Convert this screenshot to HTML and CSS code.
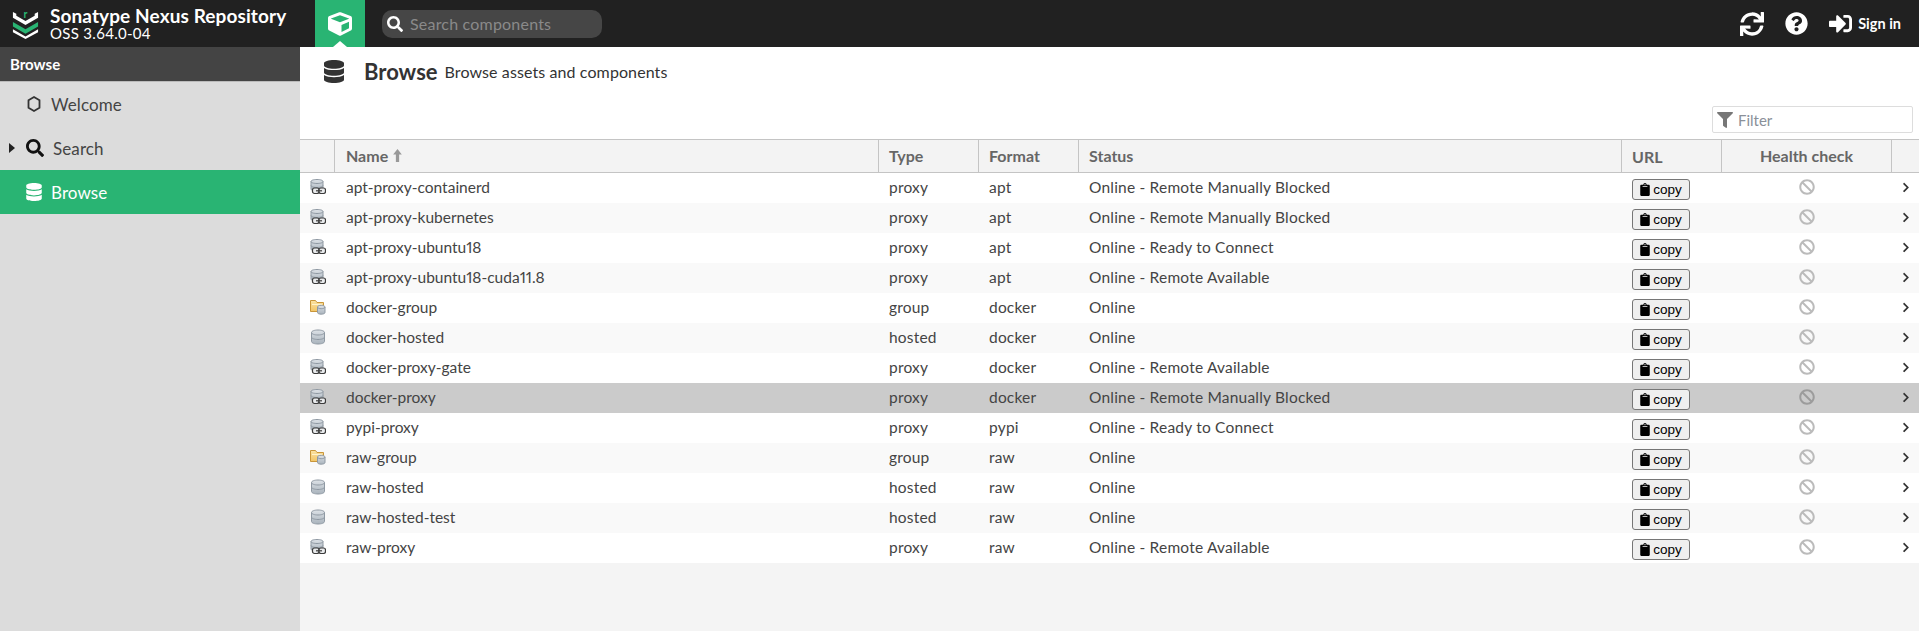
FILE: index.html
```html
<!DOCTYPE html>
<html lang="en">
<head>
    <meta charset="UTF-8">
    <title>Browse - Nexus Repository Manager</title>
    <link rel="stylesheet" href="styles.css">
</head>
<body>
    <svg class="defs" width="0" height="0">
        <defs>
            <symbol id="i-db" viewBox="0 0 448 512"><path d="M448 73.143v45.714C448 159.143 347.667 192 224 192S0 159.143 0 118.857V73.143C0 32.857 100.333 0 224 0s224 32.857 224 73.143zM448 176v102.857C448 319.143 347.667 352 224 352S0 319.143 0 278.857V176c48.125 33.143 136.208 48.572 224 48.572S399.874 209.143 448 176zm0 160v102.857C448 479.143 347.667 512 224 512S0 479.143 0 438.857V336c48.125 33.143 136.208 48.572 224 48.572S399.874 369.143 448 336z"/></symbol>
            <symbol id="i-search" viewBox="0 0 512 512"><path d="M505 442.7L405.3 343c-4.5-4.5-10.6-7-17-7H372c27.6-35.3 44-79.7 44-128C416 93.1 322.9 0 208 0S0 93.1 0 208s93.1 208 208 208c48.3 0 92.7-16.4 128-44v16.3c0 6.4 2.5 12.5 7 17l99.7 99.7c9.4 9.4 24.6 9.4 33.9 0l28.3-28.3c9.4-9.4 9.4-24.6.1-34zM208 336c-70.7 0-128-57.2-128-128 0-70.7 57.2-128 128-128 70.7 0 128 57.2 128 128 0 70.7-57.2 128-128 128z"/></symbol>
            <symbol id="i-ban" viewBox="0 0 512 512"><path d="M256 8C119.034 8 8 119.033 8 256s111.034 248 248 248 248-111.034 248-248S392.967 8 256 8zm130.108 117.892c65.448 65.448 70 165.481 20.677 235.637L150.47 105.216c70.204-49.356 170.226-44.735 235.638 20.676zM125.892 386.108c-65.448-65.448-70-165.481-20.677-235.637L361.53 406.784c-70.203 49.356-170.226 44.736-235.638-20.676z"/></symbol>
            <symbol id="i-chevron" viewBox="0 0 320 512"><path d="M285.476 272.971L91.132 467.314c-9.373 9.373-24.569 9.373-33.941 0l-22.667-22.667c-9.357-9.357-9.375-24.522-.04-33.901L188.505 256 34.484 101.255c-9.335-9.379-9.317-24.544.04-33.901l22.667-22.667c9.373-9.373 24.569-9.373 33.941 0L285.475 239.03c9.373 9.372 9.373 24.568.001 33.941z"/></symbol>
            <symbol id="i-clip" viewBox="0 0 384 512"><path d="M384 112v352c0 26.51-21.49 48-48 48H48c-26.51 0-48-21.49-48-48V112c0-26.51 21.49-48 48-48h80c0-35.29 28.71-64 64-64s64 28.71 64 64h80c26.51 0 48 21.49 48 48zM192 40c-13.255 0-24 10.745-24 24s10.745 24 24 24 24-10.745 24-24-10.745-24-24-24zm96 114v-20a6 6 0 0 0-6-6H102a6 6 0 0 0-6 6v20a6 6 0 0 0 6 6h180a6 6 0 0 0 6-6z"/></symbol>
            <linearGradient id="g-db" x1="0" y1="0" x2="0" y2="1"><stop offset="0" stop-color="#dde2e7"/><stop offset="1" stop-color="#a9b3bc"/></linearGradient>
            <linearGradient id="g-folder" x1="0" y1="0" x2="0" y2="1"><stop offset="0" stop-color="#fbe3a4"/><stop offset="1" stop-color="#f2c566"/></linearGradient>
            <symbol id="r-hosted" viewBox="0 0 16 16">
                <path d="M1.500 3.500C1.500 2 4.500 1 8 1s6.500 1 6.500 2.500v9C14.500 14 11.500 15 8 15s-6.500-1-6.500-2.500z" fill="url(#g-db)" stroke="#8f99a3"/>
                <path d="M1.500 3.500C1.500 5 4.500 6 8 6s6.500-1 6.500-2.500M1.500 8c0 1.500 3 2.500 6.500 2.500s6.500-1 6.500-2.500" fill="none" stroke="#8f99a3"/>
            </symbol>
            <symbol id="r-proxy" viewBox="0 0 16 16">
                <path d="M1 2.500C1 1.200 3.800.5 7 .5s6 .7 6 2V10c0 1.300-2.800 2-6 2s-6-.7-6-2z" fill="url(#g-db)" stroke="#8f99a3"/>
                <path d="M1 2.500c0 1.300 2.800 2 6 2s6-.7 6-2M1 6.500c0 1.300 2.800 2 6 2s6-.7 6-2" fill="none" stroke="#8f99a3"/>
                <rect x="2.500" y="9" width="6.500" height="5.500" rx="2" fill="#e8eaec" stroke="#3c3c3c" stroke-width="1.200"/>
                <rect x="9" y="9" width="6.500" height="5.500" rx="2" fill="#e8eaec" stroke="#3c3c3c" stroke-width="1.200"/>
                <path d="M6 11.800h6" stroke="#3c3c3c" stroke-width="1.200"/>
            </symbol>
            <symbol id="r-group" viewBox="0 0 16 16">
                <path d="M.5 1.500h5l1.500 2h6.500v9H.5z" fill="url(#g-folder)" stroke="#c9963a"/>
                <path d="M2 5.500h10" stroke="#fff3cf"/>
                <path d="M7.500 8c0-1 1.700-1.700 3.700-1.700s3.800.7 3.800 1.700v5.500c0 1-1.800 1.700-3.800 1.700s-3.700-.7-3.700-1.700z" fill="url(#g-db)" stroke="#8f99a3"/>
                <path d="M7.500 8c0 1 1.700 1.700 3.700 1.700s3.800-.7 3.800-1.700" fill="none" stroke="#8f99a3"/>
            </symbol>
        </defs>
    </svg>

    <header class="topbar">
        <div class="brand">
            <svg class="brand-logo" viewBox="0 -2 30 33" width="29" height="32">
                <path d="M2 2v6l13 7.500L28 8V2l-3.500 2v2L15 11.500 5.500 6V4z" fill="#fff"/>
                <text x="15" y="8" class="logo-r">r</text>
                <path d="M2 12.500l13 7.500 13-7.500V17l-13 7.500L2 17z" fill="#29b473"/>
                <path d="M2 20l13 7.500L28 20v3l-13 7-13-7z" fill="#fff"/>
            </svg>
            <div class="brand-text">
                <div class="brand-name">Sonatype Nexus Repository</div>
                <div class="brand-version">OSS 3.64.0-04</div>
            </div>
        </div>
        <div class="mode-tab">
            <svg viewBox="0 0 512 512" width="24" height="24"><path fill="#fff" d="M239.1 6.3l-208 78c-18.7 7-31.1 25-31.1 45v225.1c0 18.2 10.3 34.8 26.5 42.9l208 104c13.5 6.8 29.4 6.8 42.9 0l208-104c16.3-8.1 26.5-24.8 26.5-42.9V129.3c0-20-12.4-37.9-31.1-44.9l-208-78C262 2.2 250 2.2 239.1 6.3zM256 68.4l192 72v1.1l-192 78-192-78v-1.1l192-72zm32 356V275.5l160-65v133.9l-160 80z"/></svg>
        </div>
        <div class="quick-search">
            <svg class="icon-white" viewBox="0 0 512 512" width="16" height="16"><use href="#i-search"/></svg>
            <span>Search components</span>
        </div>
        <div class="top-actions">
            <svg class="icon-white" viewBox="0 0 512 512" width="24" height="24"><path d="M440.65 12.57l4 82.77A247.16 247.16 0 0 0 255.83 8C134.73 8 33.91 94.92 12.29 209.82A12 12 0 0 0 24.09 224h49.05a12 12 0 0 0 11.67-9.26 175.91 175.91 0 0 1 317-56.94l-101.46-4.86a12 12 0 0 0-12.57 12v47.41a12 12 0 0 0 12 12H500a12 12 0 0 0 12-12V12a12 12 0 0 0-12-12h-47.37a12 12 0 0 0-11.98 12.57zM255.83 432a175.61 175.61 0 0 1-146-77.8l101.8 4.87a12 12 0 0 0 12.57-12v-47.4a12 12 0 0 0-12-12H12a12 12 0 0 0-12 12V500a12 12 0 0 0 12 12h47.35a12 12 0 0 0 12-12.6l-4.15-82.57A247.17 247.17 0 0 0 255.83 504c121.11 0 221.93-86.92 243.55-201.82a12 12 0 0 0-11.8-14.18h-49.05a12 12 0 0 0-11.67 9.26A175.86 175.86 0 0 1 255.83 432z"/></svg>
            <svg class="icon-white" viewBox="0 0 512 512" width="23" height="23"><path d="M504 256c0 136.997-111.043 248-248 248S8 392.997 8 256C8 119.083 119.043 8 256 8s248 111.083 248 248zM262.655 90c-54.497 0-89.255 22.957-116.549 63.758-3.536 5.286-2.353 12.415 2.715 16.258l34.699 26.31c5.205 3.947 12.621 3.008 16.665-2.122 17.864-22.658 30.113-35.797 57.303-35.797 20.429 0 45.698 13.148 45.698 32.958 0 14.976-12.363 22.667-32.534 33.976C247.128 238.528 216 254.941 216 296v4c0 6.627 5.373 12 12 12h56c6.627 0 12-5.373 12-12v-1.333c0-28.462 83.186-29.647 83.186-106.667 0-58.002-60.165-102-116.531-102zM256 338c-25.365 0-46 20.635-46 46 0 25.364 20.635 46 46 46s46-20.636 46-46c0-25.365-20.635-46-46-46z"/></svg>
            <div class="sign-in">
                <svg class="icon-white" viewBox="0 0 512 512" width="23" height="23"><path d="M416 448h-84c-6.6 0-12-5.4-12-12v-40c0-6.6 5.4-12 12-12h84c17.7 0 32-14.3 32-32V160c0-17.7-14.3-32-32-32h-84c-6.6 0-12-5.4-12-12V76c0-6.6 5.4-12 12-12h84c53 0 96 43 96 96v192c0 53-43 96-96 96zm-47-201L201 79c-15-15-41-4.5-41 17v96H24c-13.3 0-24 10.7-24 24v96c0 13.3 10.7 24 24 24h136v96c0 21.5 26 32 41 17l168-168c9.3-9.4 9.3-24.6 0-34z"/></svg>
                <span>Sign in</span>
            </div>
        </div>
    </header>

    <div class="main">
        <nav class="sidebar">
            <div class="sidebar-title">Browse</div>
            <div class="nav-item">
                <svg class="nav-icon" viewBox="0 0 16 18" width="16" height="18"><path d="M8 2l5.500 3.200v7.600L8 16l-5.500-3.200V5.200z" fill="none" stroke="#333" stroke-width="1.800"/></svg>
                <span>Welcome</span>
            </div>
            <div class="nav-item">
                <span class="nav-arrow"></span>
                <svg class="nav-icon" viewBox="0 0 512 512" width="18" height="18"><use href="#i-search"/></svg>
                <span>Search</span>
            </div>
            <div class="nav-item active">
                <svg class="nav-icon" viewBox="0 0 448 512" width="16" height="18"><use href="#i-db"/></svg>
                <span>Browse</span>
            </div>
        </nav>

        <main class="content">
            <div class="page-head">
                <svg class="page-icon" viewBox="0 0 448 512" width="20" height="23"><use href="#i-db"/></svg>
                <h1>Browse</h1>
                <span class="page-sub">Browse assets and components</span>
            </div>
            <div class="toolbar">
                <div class="filter">
                    <svg viewBox="0 0 512 512" width="16" height="16"><path d="M487.976 0H24.028C2.71 0-8.047 25.866 7.058 40.971L192 225.941V432c0 7.831 3.821 15.17 10.237 19.662l80 55.98C298.02 518.69 320 507.493 320 487.98V225.941l184.947-184.97C520.021 25.896 509.338 0 487.976 0z"/></svg>
                    <span>Filter</span>
                </div>
            </div>

            <div class="grid">
                <div class="row head">
                    <div class="cell c-icon"></div>
                    <div class="cell c-name">Name <svg class="sort" viewBox="0 0 8 12" width="9" height="13"><path d="M4 0l4 5H5.500v7h-3V5H0z"/></svg></div>
                    <div class="cell c-type">Type</div>
                    <div class="cell c-format">Format</div>
                    <div class="cell c-status">Status</div>
                    <div class="cell c-url">URL</div>
                    <div class="cell c-health">Health check</div>
                    <div class="cell c-more"></div>
                </div>

                <div class="row">
                    <div class="cell c-icon"><svg width="16" height="16"><use href="#r-proxy"/></svg></div>
                    <div class="cell c-name">apt-proxy-containerd</div><div class="cell c-type">proxy</div><div class="cell c-format">apt</div><div class="cell c-status">Online - Remote Manually Blocked</div>
                    <div class="cell c-url"><button class="copy"><svg viewBox="0 0 384 512" width="10" height="13"><use href="#i-clip"/></svg> copy</button></div>
                    <div class="cell c-health"><svg class="ban" width="16" height="16"><use href="#i-ban"/></svg></div>
                    <div class="cell c-more"><svg class="more" width="8" height="11"><use href="#i-chevron"/></svg></div>
                </div>
                <div class="row">
                    <div class="cell c-icon"><svg width="16" height="16"><use href="#r-proxy"/></svg></div>
                    <div class="cell c-name">apt-proxy-kubernetes</div><div class="cell c-type">proxy</div><div class="cell c-format">apt</div><div class="cell c-status">Online - Remote Manually Blocked</div>
                    <div class="cell c-url"><button class="copy"><svg viewBox="0 0 384 512" width="10" height="13"><use href="#i-clip"/></svg> copy</button></div>
                    <div class="cell c-health"><svg class="ban" width="16" height="16"><use href="#i-ban"/></svg></div>
                    <div class="cell c-more"><svg class="more" width="8" height="11"><use href="#i-chevron"/></svg></div>
                </div>
                <div class="row">
                    <div class="cell c-icon"><svg width="16" height="16"><use href="#r-proxy"/></svg></div>
                    <div class="cell c-name">apt-proxy-ubuntu18</div><div class="cell c-type">proxy</div><div class="cell c-format">apt</div><div class="cell c-status">Online - Ready to Connect</div>
                    <div class="cell c-url"><button class="copy"><svg viewBox="0 0 384 512" width="10" height="13"><use href="#i-clip"/></svg> copy</button></div>
                    <div class="cell c-health"><svg class="ban" width="16" height="16"><use href="#i-ban"/></svg></div>
                    <div class="cell c-more"><svg class="more" width="8" height="11"><use href="#i-chevron"/></svg></div>
                </div>
                <div class="row">
                    <div class="cell c-icon"><svg width="16" height="16"><use href="#r-proxy"/></svg></div>
                    <div class="cell c-name">apt-proxy-ubuntu18-cuda11.8</div><div class="cell c-type">proxy</div><div class="cell c-format">apt</div><div class="cell c-status">Online - Remote Available</div>
                    <div class="cell c-url"><button class="copy"><svg viewBox="0 0 384 512" width="10" height="13"><use href="#i-clip"/></svg> copy</button></div>
                    <div class="cell c-health"><svg class="ban" width="16" height="16"><use href="#i-ban"/></svg></div>
                    <div class="cell c-more"><svg class="more" width="8" height="11"><use href="#i-chevron"/></svg></div>
                </div>
                <div class="row">
                    <div class="cell c-icon"><svg width="16" height="16"><use href="#r-group"/></svg></div>
                    <div class="cell c-name">docker-group</div><div class="cell c-type">group</div><div class="cell c-format">docker</div><div class="cell c-status">Online</div>
                    <div class="cell c-url"><button class="copy"><svg viewBox="0 0 384 512" width="10" height="13"><use href="#i-clip"/></svg> copy</button></div>
                    <div class="cell c-health"><svg class="ban" width="16" height="16"><use href="#i-ban"/></svg></div>
                    <div class="cell c-more"><svg class="more" width="8" height="11"><use href="#i-chevron"/></svg></div>
                </div>
                <div class="row">
                    <div class="cell c-icon"><svg width="16" height="16"><use href="#r-hosted"/></svg></div>
                    <div class="cell c-name">docker-hosted</div><div class="cell c-type">hosted</div><div class="cell c-format">docker</div><div class="cell c-status">Online</div>
                    <div class="cell c-url"><button class="copy"><svg viewBox="0 0 384 512" width="10" height="13"><use href="#i-clip"/></svg> copy</button></div>
                    <div class="cell c-health"><svg class="ban" width="16" height="16"><use href="#i-ban"/></svg></div>
                    <div class="cell c-more"><svg class="more" width="8" height="11"><use href="#i-chevron"/></svg></div>
                </div>
                <div class="row">
                    <div class="cell c-icon"><svg width="16" height="16"><use href="#r-proxy"/></svg></div>
                    <div class="cell c-name">docker-proxy-gate</div><div class="cell c-type">proxy</div><div class="cell c-format">docker</div><div class="cell c-status">Online - Remote Available</div>
                    <div class="cell c-url"><button class="copy"><svg viewBox="0 0 384 512" width="10" height="13"><use href="#i-clip"/></svg> copy</button></div>
                    <div class="cell c-health"><svg class="ban" width="16" height="16"><use href="#i-ban"/></svg></div>
                    <div class="cell c-more"><svg class="more" width="8" height="11"><use href="#i-chevron"/></svg></div>
                </div>
                <div class="row selected">
                    <div class="cell c-icon"><svg width="16" height="16"><use href="#r-proxy"/></svg></div>
                    <div class="cell c-name">docker-proxy</div><div class="cell c-type">proxy</div><div class="cell c-format">docker</div><div class="cell c-status">Online - Remote Manually Blocked</div>
                    <div class="cell c-url"><button class="copy"><svg viewBox="0 0 384 512" width="10" height="13"><use href="#i-clip"/></svg> copy</button></div>
                    <div class="cell c-health"><svg class="ban" width="16" height="16"><use href="#i-ban"/></svg></div>
                    <div class="cell c-more"><svg class="more" width="8" height="11"><use href="#i-chevron"/></svg></div>
                </div>
                <div class="row">
                    <div class="cell c-icon"><svg width="16" height="16"><use href="#r-proxy"/></svg></div>
                    <div class="cell c-name">pypi-proxy</div><div class="cell c-type">proxy</div><div class="cell c-format">pypi</div><div class="cell c-status">Online - Ready to Connect</div>
                    <div class="cell c-url"><button class="copy"><svg viewBox="0 0 384 512" width="10" height="13"><use href="#i-clip"/></svg> copy</button></div>
                    <div class="cell c-health"><svg class="ban" width="16" height="16"><use href="#i-ban"/></svg></div>
                    <div class="cell c-more"><svg class="more" width="8" height="11"><use href="#i-chevron"/></svg></div>
                </div>
                <div class="row">
                    <div class="cell c-icon"><svg width="16" height="16"><use href="#r-group"/></svg></div>
                    <div class="cell c-name">raw-group</div><div class="cell c-type">group</div><div class="cell c-format">raw</div><div class="cell c-status">Online</div>
                    <div class="cell c-url"><button class="copy"><svg viewBox="0 0 384 512" width="10" height="13"><use href="#i-clip"/></svg> copy</button></div>
                    <div class="cell c-health"><svg class="ban" width="16" height="16"><use href="#i-ban"/></svg></div>
                    <div class="cell c-more"><svg class="more" width="8" height="11"><use href="#i-chevron"/></svg></div>
                </div>
                <div class="row">
                    <div class="cell c-icon"><svg width="16" height="16"><use href="#r-hosted"/></svg></div>
                    <div class="cell c-name">raw-hosted</div><div class="cell c-type">hosted</div><div class="cell c-format">raw</div><div class="cell c-status">Online</div>
                    <div class="cell c-url"><button class="copy"><svg viewBox="0 0 384 512" width="10" height="13"><use href="#i-clip"/></svg> copy</button></div>
                    <div class="cell c-health"><svg class="ban" width="16" height="16"><use href="#i-ban"/></svg></div>
                    <div class="cell c-more"><svg class="more" width="8" height="11"><use href="#i-chevron"/></svg></div>
                </div>
                <div class="row">
                    <div class="cell c-icon"><svg width="16" height="16"><use href="#r-hosted"/></svg></div>
                    <div class="cell c-name">raw-hosted-test</div><div class="cell c-type">hosted</div><div class="cell c-format">raw</div><div class="cell c-status">Online</div>
                    <div class="cell c-url"><button class="copy"><svg viewBox="0 0 384 512" width="10" height="13"><use href="#i-clip"/></svg> copy</button></div>
                    <div class="cell c-health"><svg class="ban" width="16" height="16"><use href="#i-ban"/></svg></div>
                    <div class="cell c-more"><svg class="more" width="8" height="11"><use href="#i-chevron"/></svg></div>
                </div>
                <div class="row">
                    <div class="cell c-icon"><svg width="16" height="16"><use href="#r-proxy"/></svg></div>
                    <div class="cell c-name">raw-proxy</div><div class="cell c-type">proxy</div><div class="cell c-format">raw</div><div class="cell c-status">Online - Remote Available</div>
                    <div class="cell c-url"><button class="copy"><svg viewBox="0 0 384 512" width="10" height="13"><use href="#i-clip"/></svg> copy</button></div>
                    <div class="cell c-health"><svg class="ban" width="16" height="16"><use href="#i-ban"/></svg></div>
                    <div class="cell c-more"><svg class="more" width="8" height="11"><use href="#i-chevron"/></svg></div>
                </div>
            </div>
        </main>
    </div>
</body>
</html>
```

FILE: styles.css
```css
* {
    box-sizing: border-box;
}
html, body {
    height: 100%;
}
body {
    margin: 0;
    font-family: Lato, "Open Sans", sans-serif;
    font-size: 14px;
    color: #333;
    display: flex;
    flex-direction: column;
    overflow: hidden;
}
.defs {
    position: absolute;
}

/* top bar */
.topbar {
    height: 47px;
    flex: none;
    background: #212121;
    display: flex;
    align-items: center;
    color: #fff;
}
.brand {
    width: 315px;
    display: flex;
    align-items: center;
    gap: 10px;
    padding-left: 11px;
}
.logo-r {
    font: bold 11px Lato, sans-serif;
    fill: #29b473;
    text-anchor: middle;
}
.brand-name {
    font-size: 19px;
    font-weight: 700;
    line-height: 20px;
    letter-spacing: 0.1px;
}
.brand-version {
    font-size: 15px;
    line-height: 15px;
    letter-spacing: 0.3px;
}
.mode-tab {
    position: relative;
    width: 50px;
    height: 47px;
    background: #29b473;
    display: flex;
    align-items: center;
    justify-content: center;
}
.mode-tab::after {
    content: "";
    position: absolute;
    bottom: 0;
    left: 18px;
    border: 7px solid transparent;
    border-top: 0;
    border-bottom: 6px solid #fff;
}
.quick-search {
    margin-left: 17px;
    width: 220px;
    height: 28px;
    border-radius: 10px;
    background: #464646;
    display: flex;
    align-items: center;
    gap: 7px;
    padding-left: 5px;
    color: #8a8a8a;
    font-size: 16px;
    letter-spacing: 0.2px;
}
.icon-white {
    fill: #fff;
}
.top-actions {
    margin-left: auto;
    display: flex;
    align-items: center;
    gap: 21px;
    padding-right: 18px;
}
.sign-in {
    display: flex;
    align-items: center;
    gap: 6px;
    font-size: 14.5px;
    font-weight: 700;
}

/* left nav */
.main {
    flex: 1;
    display: flex;
    min-height: 0;
}
.sidebar {
    width: 300px;
    flex: none;
    background: #dcdcdc;
}
.sidebar-title {
    height: 35px;
    background: #444;
    color: #fff;
    font-weight: 700;
    font-size: 15px;
    line-height: 34px;
    padding-left: 10px;
    border-bottom: 1px solid #bbb;
}
.nav-item {
    position: relative;
    height: 44px;
    display: flex;
    align-items: center;
    gap: 9px;
    padding-left: 26px;
    font-size: 17px;
    letter-spacing: 0.1px;
    color: #444;
}
.nav-icon {
    fill: #111;
    flex: none;
}
.nav-arrow {
    position: absolute;
    left: 9px;
    top: 17px;
    border: 5px solid transparent;
    border-right: 0;
    border-left: 6px solid #222;
}
.nav-item.active {
    background: #29b473;
    color: #fff;
}
.nav-item.active .nav-icon {
    fill: #fff;
}

/* content */
.content {
    flex: 1;
    min-width: 0;
    background: #f4f4f4;
}
.page-head {
    height: 49px;
    background: #fff;
    display: flex;
    align-items: center;
    padding-left: 24px;
}
.page-icon {
    fill: #333;
    margin-right: 20px;
}
.page-head h1 {
    margin: 0 7px 0 0;
    font-size: 22px;
    font-weight: 700;
}
.page-sub {
    font-size: 16px;
    letter-spacing: 0.1px;
}
.toolbar {
    height: 43px;
    background: #fff;
    display: flex;
    justify-content: flex-end;
    align-items: flex-end;
    padding: 0 6px 6px 0;
}
.filter {
    width: 201px;
    height: 27px;
    border: 1px solid #ddd;
    border-radius: 2px;
    display: flex;
    align-items: center;
    gap: 5px;
    padding-left: 4px;
    color: #8a9099;
    font-size: 15px;
}
.filter svg {
    fill: #777;
}

/* grid */
.row {
    height: 30px;
    display: flex;
    align-items: center;
    background: #fff;
    font-size: 15.5px;
    letter-spacing: 0.2px;
    color: #444;
}
.row:nth-child(odd) {
    background: #f9f9f9;
}
.row.selected {
    background: #cbcbcb;
}
.row.head {
    height: 34px;
    background: #f3f3f3;
    border-top: 1px solid #c4c4c4;
    border-bottom: 1px solid #c4c4c4;
    font-weight: 700;
    font-size: 16px;
    letter-spacing: 0;
    color: #666;
}
.cell {
    height: 100%;
    display: flex;
    align-items: center;
    padding-left: 10px;
    padding-bottom: 2px;
    flex: none;
}
.head .cell {
    border-right: 1px solid #c4c4c4;
}
.head .c-more {
    border-right: 0;
}
.c-icon { width: 35px; }
.c-name {
    width: 544px;
    padding-left: 11px;
    letter-spacing: 0;
    font-variant-numeric: proportional-nums;
}
.c-type { width: 100px; }
.c-format { width: 100px; }
.c-status { width: 543px; }
.c-url {
    width: 100px;
    padding-bottom: 0;
}
.c-health {
    width: 170px;
    justify-content: center;
    padding-left: 0;
}
.c-more { width: 27px; }
.sort {
    fill: #999;
    margin-left: 5px;
}
.copy {
    height: 21px;
    width: 58px;
    margin-top: 3px;
    padding: 0;
    border: 1px solid #767676;
    border-radius: 3px;
    background: #efefef;
    color: #000;
    font-family: "Liberation Sans", Arial, sans-serif;
    font-size: 13.5px;
    display: flex;
    align-items: center;
    justify-content: center;
    gap: 3px;
}
.copy svg {
    fill: #000;
}
.ban {
    fill: #bbb;
}
.selected .ban {
    fill: #9c9c9c;
}
.more {
    fill: #333;
}
```
